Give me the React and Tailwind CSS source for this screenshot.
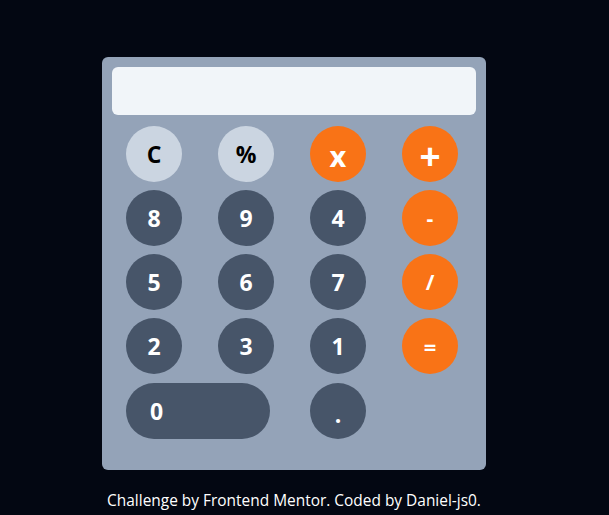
const keys = [
  { label: "C", kind: "light" },
  { label: "%", kind: "light" },
  { label: "x", kind: "op", size: "text-[29px] pt-[3px]" },
  { label: "+", kind: "op", size: "text-[37px] pt-[3px]" },
  { label: "8", kind: "num" },
  { label: "9", kind: "num" },
  { label: "4", kind: "num" },
  { label: "-", kind: "op", size: "text-[21px]" },
  { label: "5", kind: "num" },
  { label: "6", kind: "num" },
  { label: "7", kind: "num" },
  { label: "/", kind: "op", size: "text-[21px]" },
  { label: "2", kind: "num" },
  { label: "3", kind: "num" },
  { label: "1", kind: "num" },
  { label: "=", kind: "op", size: "text-[22px]" },
];

const styles = {
  light: "bg-[#cbd5e1] text-black",
  op: "bg-[#f97316] text-white",
  num: "bg-[#475569] text-white",
};

function Key({ label, kind, size = "text-[23px]" }) {
  return (
    <button
      className={`w-14 h-14 rounded-full flex items-center justify-center font-bold leading-none ${size} ${styles[kind]}`}
    >
      {label}
    </button>
  );
}

export default function App() {
  return (
    <div
      className="min-h-screen bg-[#030712] flex flex-col items-center pt-[57px]"
      style={{ fontFamily: '"Open Sans", "Noto Sans", sans-serif' }}
    >
      <div className="mr-[21px] w-[384px] bg-[#94a3b8] rounded-md pt-[10px] pb-[31px] px-[10px]">
        <div className="h-12 bg-[#f1f5f9] rounded-md" />
        <div className="mt-[11px] pl-[14px] grid grid-cols-[repeat(4,56px)] gap-x-9 gap-y-2">
          {keys.map((k) => (
            <Key key={k.label} {...k} />
          ))}
          <button className="mt-px col-span-2 w-[144px] h-14 rounded-full bg-[#475569] text-white text-[23px] font-bold text-left pl-6">
            0
          </button>
          <button className="mt-px w-14 h-14 rounded-full bg-[#475569] text-white text-[23px] font-bold flex items-end justify-center pb-[8px]">
            .
          </button>
        </div>
      </div>
      <p className="mr-[21px] mt-[19px] text-white text-[15.45px]">
        Challenge by Frontend Mentor. Coded by Daniel-js0.
      </p>
    </div>
  );
}
